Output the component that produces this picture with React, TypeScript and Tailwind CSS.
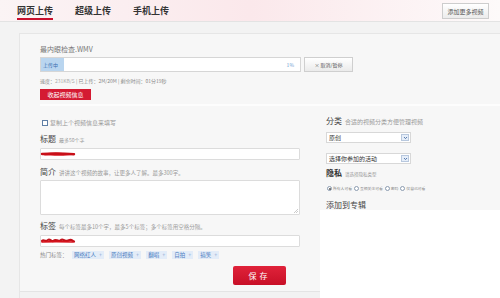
export default function App() {
  const hotTags = ["网络红人", "原创视频", "翻唱", "自拍", "搞笑"];
  const privacy = ["所有人可看", "互相关注可看", "密码", "仅自己可看"];

  return (
    <div className="w-[500px] h-[298px] overflow-hidden bg-[#f3f3f3] flex flex-col font-['Noto_Sans_CJK_SC',sans-serif] text-[#444]">
      {/* header */}
      <div className="h-[22px] shrink-0 flex items-stretch border-b border-[#e3e3e3] bg-gradient-to-r from-[#fbf4f5] via-[#fbe8eb] to-[#fdfafa]">
        <div className="flex gap-[22px] pl-[17px]">
          {["网页上传", "超级上传", "手机上传"].map((t, i) => (
            <div key={t} className="flex flex-col pt-[6px]">
              <div className="text-[9px] leading-[10px] font-bold text-[#333]">{t}</div>
              <div className={`mt-auto mb-[1px] h-[2px] ${i === 0 ? "bg-[#c8102e]" : ""}`} />
            </div>
          ))}
        </div>
        <div className="ml-auto mr-[11px] mt-[3px] h-[16px] w-[47px] border border-[#cdcdcd] bg-gradient-to-b from-white to-[#ececec] flex items-center justify-center text-[6px] text-[#555]">
          添加更多视频
        </div>
      </div>

      {/* panel */}
      <div className="mt-[11px] ml-[19px] flex-1 flex flex-col bg-[#f7f7f7] border-l border-t border-[#e6e6e6]">
        {/* upload status */}
        <div className="pl-[20px] pt-[11px] shrink-0">
          <div className="text-[7px] leading-[9px] text-[#777]">最内眼检查.WMV</div>
          <div className="mt-[3px] flex">
            <div className="w-[261px] h-[15px] border border-[#d6d6d6] bg-white flex items-stretch">
              <div className="w-[23px] bg-[#b9d5ef] flex items-center pl-[2px] text-[5px] text-[#3b6fb0]">上传中</div>
              <div className="ml-auto pr-[6px] flex items-center text-[5px] text-[#6d9bd1]">1%</div>
            </div>
            <div className="ml-[3px] w-[49px] h-[15px] border border-[#cfcfcf] bg-gradient-to-b from-white to-[#ebebeb] flex items-center justify-center text-[5px] text-[#555]">
              × 取消/暂停
            </div>
          </div>
          <div className="mt-[5px] text-[5px] leading-[7px] text-[#888]">
            速度：<span className="text-[#aaa]">231KB/S</span> | 已上传：2M/20M | 剩余时间：01分19秒
          </div>
          <div className="mt-[5px] h-[11px] w-[51px] bg-[#d41a32] flex items-center justify-center text-[6px] text-white">
            收起视频信息
          </div>
          <div className="mt-[4px] h-[2px] bg-[#fdfdfd]" />
        </div>

        {/* form */}
        <div className="flex-1 flex">
          <div className="w-[300px] shrink-0 flex flex-col">
            <div className="pl-[20px] pr-[20px] flex flex-col">
              <div className="mt-[12px] flex items-center leading-[9px]">
                <div className="ml-[2px] w-[6px] h-[6px] border border-[#5f7fa6] bg-white" />
                <div className="ml-[2px] text-[6px] text-[#999]">复制上个视频信息来填写</div>
              </div>

              <div className="mt-[7px] flex items-baseline leading-[10px]">
                <span className="text-[8px]">标题</span>
                <span className="ml-[3px] text-[5px] text-[#999]">最多50个字</span>
              </div>
              <div className="mt-[3px] h-[12px] border border-[#dcdcdc] bg-white rounded-[1px] flex items-center">
                <svg width="38" height="8" viewBox="0 0 38 8" className="-ml-[2px]">
                  <path d="M2 4 C8 2.6 16 2.8 24 3 C30 3.2 34 3.6 36 4.4 C30 5.6 18 6 8 5.6 C5 5.4 3 5 2 4 Z" fill="#d7121c" />
                  <path d="M3 4 C12 3.4 26 3.6 35 4.2" stroke="#c80f18" strokeWidth="2.4" strokeLinecap="round" fill="none" />
                </svg>
              </div>

              <div className="mt-[7px] flex items-baseline leading-[10px]">
                <span className="text-[8px]">简介</span>
                <span className="ml-[3px] text-[5.5px] text-[#999]">讲讲这个视频的故事，让更多人了解。最多300字。</span>
              </div>
              <div className="mt-[2px] h-[35px] border border-[#dcdcdc] bg-white rounded-[1px] flex items-end justify-end">
                <svg width="5" height="5" viewBox="0 0 5 5" className="mr-[1px] mb-[1px]">
                  <path d="M1 5 L5 1 M3 5 L5 3" stroke="#aaa" strokeWidth="0.6" />
                </svg>
              </div>

              <div className="mt-[6px] flex items-baseline leading-[10px]">
                <span className="text-[8px]">标签</span>
                <span className="ml-[3px] text-[5.5px] text-[#999]">每个标签最多10个字，最多5个标签；多个标签用空格分隔。</span>
              </div>
              <div className="mt-[3px] h-[12px] border border-[#dcdcdc] bg-white rounded-[1px] flex items-start">
                <svg width="36" height="8" viewBox="0 0 36 8" className="-ml-[1px] mt-[1px]">
                  <path d="M2 4 C4 1.5 6 6 8 3 C10 1 12 6 14 3.5 C16 1.5 18 5.5 21 3 C23 1.5 26 5.5 29 3.2 C31 2 33 4 34 4.5" stroke="#c3101a" strokeWidth="2.2" strokeLinecap="round" fill="none" />
                  <path d="M2 5 C10 4.5 24 4.6 33 5" stroke="#d7121c" strokeWidth="1.6" strokeLinecap="round" fill="none" />
                </svg>
              </div>

              <div className="mt-[4px] flex items-center leading-[8px]">
                <span className="text-[5.5px] text-[#888] w-[32px]">热门标签：</span>
                {hotTags.map((t, i) => (
                  <span key={t} className={`${i === 0 ? "" : "ml-[5px]"} h-[8px] px-[2px] bg-[#e3ecf8] flex items-center text-[5.5px] text-[#4a7dc0]`}>
                    {t}
                    <span className="ml-[3px] text-[#8aa9d3]">+</span>
                  </span>
                ))}
              </div>

              <div className="mt-[7px] ml-[193px] h-[19px] w-[53px] rounded-[2px] bg-gradient-to-b from-[#e0223a] to-[#c80f27] flex items-center justify-center text-[8px] text-white tracking-[3px]">
                保存
              </div>
            </div>
            <div className="mt-auto h-[7px] border-t border-[#e4e4e4] bg-[#f2f2f2]" />
          </div>

          {/* right column */}
          <div className="flex-1 flex flex-col">
            <div className="pl-[6px] flex flex-col">
              <div className="mt-[10px] flex items-baseline leading-[10px]">
                <span className="text-[8px]">分类</span>
                <span className="ml-[3px] text-[6px] text-[#999]">合适的视频分类方便管理视频</span>
              </div>
              <div className="mt-[5px] h-[11px] w-[85px] border border-[#d8d8d8] bg-white flex items-center pl-[2px]">
                <span className="text-[6px] text-[#333]">原创</span>
                <Chevron />
              </div>
              <div className="mt-[10px] h-[11px] w-[85px] border border-[#d8d8d8] bg-white flex items-center pl-[2px]">
                <span className="text-[6px] text-[#333]">选择你参加的活动</span>
                <Chevron />
              </div>

              <div className="mt-[4px] flex items-baseline leading-[10px]">
                <span className="text-[8px] font-bold text-[#333]">隐私</span>
                <span className="ml-[3px] text-[4.5px] text-[#999]">请选择隐私类型</span>
              </div>
              <div className="mt-[6px] flex items-center leading-[7px]">
                {privacy.map((p, i) => (
                  <div key={p} className={`${i === 0 ? "ml-[1px]" : "ml-[2px]"} flex items-center`}>
                    <div className="w-[5px] h-[5px] rounded-full border border-[#8a9bb0] bg-white flex items-center justify-center">
                      {i === 0 && <div className="w-[2px] h-[2px] rounded-full bg-[#555]" />}
                    </div>
                    <span className="ml-[1px] text-[3.8px] text-[#888]">{p}</span>
                  </div>
                ))}
              </div>

              <div className="mt-[8px] text-[8px] leading-[10px]">添加到专辑</div>
            </div>
            <div className="flex-1 bg-white" />
          </div>
        </div>
      </div>
    </div>
  );
}

function Chevron() {
  return (
    <div className="ml-auto mr-[1px] w-[8px] h-[7px] border border-[#b8c8de] bg-[#e6eef9] flex items-center justify-center">
      <svg width="5" height="4" viewBox="0 0 5 4">
        <path d="M1 1 L2.5 2.6 L4 1" stroke="#4a6fa5" strokeWidth="0.9" fill="none" />
      </svg>
    </div>
  );
}
